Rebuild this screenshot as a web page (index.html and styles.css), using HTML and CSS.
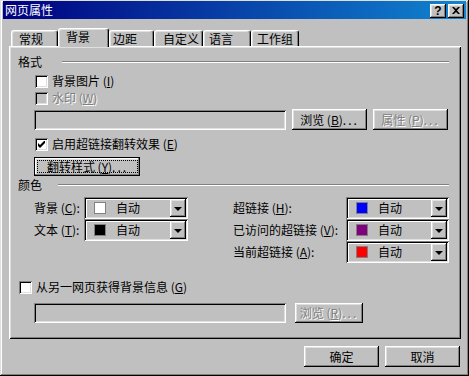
FILE: index.html
```html
<!DOCTYPE html>
<html lang="zh-CN">
<head>
  <meta charset="UTF-8" />
  <meta name="viewport" content="width=device-width, initial-scale=1.0"/>
  <title>网页属性</title>
  <link rel="stylesheet" href="styles.css">
</head>
<body>
  <div class="window">
    <div class="titlebar">
      <span class="title">网页属性</span>
      <div class="title-buttons">
        <span class="title-btn help">?</span>
        <span class="title-btn"><svg width="8" height="7" viewBox="0 0 8 7"><path d="M0 0h2l2 2 2-2h2L5 3.5 8 7H6L4 5 2 7H0l3-3.5z"/></svg></span>
      </div>
    </div>

    <div class="tabs">
      <div class="tab tab-general">常规</div>
      <div class="tab tab-active">背景</div>
      <div class="tab tab-margin">边距</div>
      <div class="tab tab-custom">自定义</div>
      <div class="tab tab-lang">语言</div>
      <div class="tab tab-group">工作组</div>
    </div>

    <div class="panel">
      <div class="section-head">
        <span>格式</span><span class="rule rule-format"></span>
      </div>

      <div class="check indent row-bgimage"><span class="box"></span><span>背景图片 (<u>I</u>)</span></div>
      <div class="check indent row-watermark"><span class="box box-disabled"></span><span class="dim">水印 (<u>W</u>)</span></div>

      <div class="field-row indent row-image">
        <span class="textbox"></span>
        <span class="btn btn-browse">浏览 (<u>B</u>)<span class="dots">...</span></span>
        <span class="btn btn-browse"><span class="dim">属性 (<u>P</u>)<span class="dots">...</span></span></span>
      </div>

      <div class="check indent row-rollover">
        <span class="box"><svg width="7" height="7" viewBox="0 0 7 7"><path d="M0 2v3l2 2 5-5V0h-1L2 4z"/></svg></span>
        <span>启用超链接翻转效果 (<u>E</u>)</span>
      </div>

      <div class="indent row-style">
        <span class="btn btn-focus"><span class="focus-ring">翻转样式 (<u>Y</u>)<span class="dots">...</span></span></span>
      </div>

      <div class="section-head row-color-head">
        <span>颜色</span><span class="rule rule-color"></span>
      </div>

      <div class="colors">
        <div class="color-col">
          <div class="color-row">
            <span class="color-label">背景 (<u>C</u>):</span>
            <span class="combo"><span class="combo-field"><span class="swatch swatch-white"></span>自动</span><span class="combo-arrow"></span></span>
          </div>
          <div class="color-row">
            <span class="color-label">文本 (<u>T</u>):</span>
            <span class="combo"><span class="combo-field"><span class="swatch swatch-black"></span>自动</span><span class="combo-arrow"></span></span>
          </div>
        </div>
        <div class="color-col color-col-right">
          <div class="color-row">
            <span class="color-label">超链接 (<u>H</u>):</span>
            <span class="combo"><span class="combo-field"><span class="swatch swatch-blue"></span>自动</span><span class="combo-arrow"></span></span>
          </div>
          <div class="color-row">
            <span class="color-label">已访问的超链接 (<u>V</u>):</span>
            <span class="combo"><span class="combo-field"><span class="swatch swatch-purple"></span>自动</span><span class="combo-arrow"></span></span>
          </div>
          <div class="color-row">
            <span class="color-label">当前超链接 (<u>A</u>):</span>
            <span class="combo"><span class="combo-field"><span class="swatch swatch-red"></span>自动</span><span class="combo-arrow"></span></span>
          </div>
        </div>
      </div>

      <div class="check row-other"><span class="box"></span><span>从另一网页获得背景信息 (<u>G</u>)</span></div>

      <div class="field-row indent row-source">
        <span class="textbox"></span>
        <span class="btn btn-browse-sm"><span class="dim">浏览 (<u>R</u>)<span class="dots">...</span></span></span>
      </div>
    </div>

    <div class="footer">
      <span class="btn btn-footer">确定</span>
      <span class="btn btn-footer">取消</span>
    </div>
  </div>
</body>
</html>
```

FILE: styles.css
```css
body {
  margin: 0;
  background: #c0c0c0;
  font-family: "Noto Sans CJK SC", "Liberation Sans", sans-serif;
  font-size: 12px;
  line-height: 14px;
  color: #000;
  overflow: hidden;
}
u {
  text-underline-offset: 1px;
}
.window {
  width: 469px;
  height: 376px;
  box-sizing: border-box;
  padding: 1px 3px 3px;
  background: #c0c0c0;
  box-shadow: inset -1px -1px #000, inset 1px 1px #dfdfdf, inset -2px -2px #808080, inset 2px 2px #fff;
}

/* title bar */
.titlebar {
  height: 18px;
  display: flex;
  align-items: center;
  justify-content: space-between;
  padding: 0 2px;
  background: linear-gradient(to right, #000080, #1084d0);
  color: #fff;
}
.title-buttons {
  display: flex;
  gap: 2px;
  margin-top: 1px;
}
.title-btn {
  width: 16px;
  height: 14px;
  box-sizing: border-box;
  display: flex;
  align-items: center;
  justify-content: center;
  background: #c0c0c0;
  color: #000;
  box-shadow: inset -1px -1px #000, inset 1px 1px #fff, inset -2px -2px #808080, inset 2px 2px #dfdfdf;
}
.title-btn.help {
  font-family: "Liberation Sans", sans-serif;
  font-weight: bold;
  font-size: 12px;
  line-height: 12px;
}

/* tabs */
.tabs {
  display: flex;
  align-items: flex-end;
  height: 18px;
  margin: 9px 0 0 8px;
}
.tab {
  height: 16px;
  box-sizing: border-box;
  display: flex;
  align-items: center;
  border: 1px solid #fff;
  border-right-color: #000;
  border-bottom: none;
  border-radius: 3px 3px 0 0;
  box-shadow: inset -1px 0 #808080, inset 1px 1px #dfdfdf;
  background: #c0c0c0;
}
.tab-active {
  position: relative;
  z-index: 1;
  height: 19px;
  margin-bottom: -1px;
  padding-bottom: 3px;
}
.tab-general { width: 47px; padding-left: 7px; }
.tab-active { width: 51px; padding-left: 7px; }
.tab-margin { width: 45px; padding-left: 3px; }
.tab-custom { width: 49px; padding-left: 8px; }
.tab-lang { width: 48px; padding-left: 5px; }
.tab-group { width: 48px; padding-left: 5px; }

/* panel */
.panel {
  width: 452px;
  height: 293px;
  margin-left: 6px;
  box-sizing: border-box;
  padding-top: 9px;
  display: flex;
  flex-direction: column;
  align-items: flex-start;
  box-shadow: inset 1px 1px #fff, inset -1px -1px #000, inset 2px 2px #dfdfdf, inset -2px -2px #808080;
}
.section-head {
  align-self: stretch;
  display: flex;
  align-items: center;
  height: 14px;
  padding: 0 12px 0 9px;
}
.rule {
  flex: 1;
  height: 0;
  border-top: 1px solid #808080;
  border-bottom: 1px solid #fff;
}
.rule-format { margin-left: 20px; }
.rule-color { margin-left: 16px; }
.indent {
  margin-left: 25px;
}

.check {
  display: flex;
  align-items: center;
  height: 14px;
}
.check.indent {
  margin-left: 26px;
}
.box {
  width: 13px;
  height: 13px;
  box-sizing: border-box;
  margin-right: 4px;
  display: flex;
  align-items: center;
  justify-content: center;
  background: #fff;
  box-shadow: inset 1px 1px #808080, inset -1px -1px #fff, inset 2px 2px #000, inset -2px -2px #dfdfdf;
}
.box-disabled {
  background: #c0c0c0;
}
.dim {
  color: #808080;
  text-shadow: 1px 1px #fff;
}
.dots {
  letter-spacing: 2px;
}

.row-bgimage { margin-top: 5px; }
.row-watermark { margin-top: 3px; }
.row-image { margin-top: 4px; }
.row-rollover { margin-top: 7px; }
.row-style { margin-top: 6px; }
.row-color-head { margin-top: 2px; }
.colors { margin-top: 5px; }
.row-other { margin-top: 17px; margin-left: 10px; }
.row-source { margin-top: 8px; }

.field-row {
  display: flex;
  align-items: center;
  height: 21px;
}
.textbox {
  width: 252px;
  height: 20px;
  box-sizing: border-box;
  background: #c0c0c0;
  box-shadow: inset 1px 1px #808080, inset -1px -1px #fff, inset 2px 2px #000, inset -2px -2px #dfdfdf;
}

/* buttons */
.btn {
  display: flex;
  align-items: center;
  justify-content: center;
  box-sizing: border-box;
  background: #c0c0c0;
  box-shadow: inset -1px -1px #000, inset 1px 1px #fff, inset -2px -2px #808080, inset 2px 2px #dfdfdf;
  white-space: nowrap;
}
.btn-browse {
  width: 75px;
  height: 21px;
  margin-left: 6px;
}
.btn-browse-sm {
  width: 68px;
  height: 20px;
  margin-left: 9px;
}
.btn-focus {
  width: 106px;
  height: 19px;
  border: 1px solid #000;
  box-shadow: inset -1px -1px #808080, inset 1px 1px #fff, inset 2px 2px #dfdfdf;
}
.focus-ring {
  flex: 1;
  height: 11px;
  margin: 0 2px 0 3px;
  display: flex;
  align-items: center;
  justify-content: center;
  outline: 1px dotted #000;
}

/* colours */
.colors {
  display: flex;
  margin-left: 25px;
}
.color-col-right {
  margin-left: 45px;
}
.color-row {
  display: flex;
  align-items: center;
  height: 22px;
}
.color-label {
  width: 50px;
  white-space: nowrap;
}
.color-col-right .color-label {
  width: 113px;
}
.combo {
  width: 104px;
  height: 22px;
  box-sizing: border-box;
  padding: 2px;
  display: flex;
  box-shadow: inset 1px 1px #808080, inset -1px -1px #fff, inset 2px 2px #000, inset -2px -2px #dfdfdf;
}
.color-col-right .combo {
  width: 103px;
}
.combo-field {
  flex: 1;
  display: flex;
  align-items: center;
  padding-left: 8px;
  box-shadow: inset 1px 1px #fff;
}
.swatch {
  width: 12px;
  height: 12px;
  box-sizing: border-box;
  border: 1px solid #808080;
  margin-right: 10px;
}
.swatch-white { background: #fff; }
.swatch-black { background: #000; }
.swatch-blue { background: #0000ff; }
.swatch-purple { background: #800080; }
.swatch-red { background: #ff0000; }
.combo-arrow {
  width: 16px;
  display: flex;
  align-items: center;
  justify-content: center;
  box-shadow: inset -1px -1px #000, inset 1px 1px #fff, inset -2px -2px #808080, inset 2px 2px #dfdfdf;
}
.combo-arrow::after {
  content: "";
  border-top: 4px solid #000;
  border-left: 4px solid transparent;
  border-right: 4px solid transparent;
  margin-top: 1px;
}

/* footer */
.footer {
  display: flex;
  justify-content: flex-end;
  gap: 6px;
  margin-top: 7px;
  padding-right: 6px;
}
.btn-footer {
  width: 75px;
  height: 21px;
}
```
